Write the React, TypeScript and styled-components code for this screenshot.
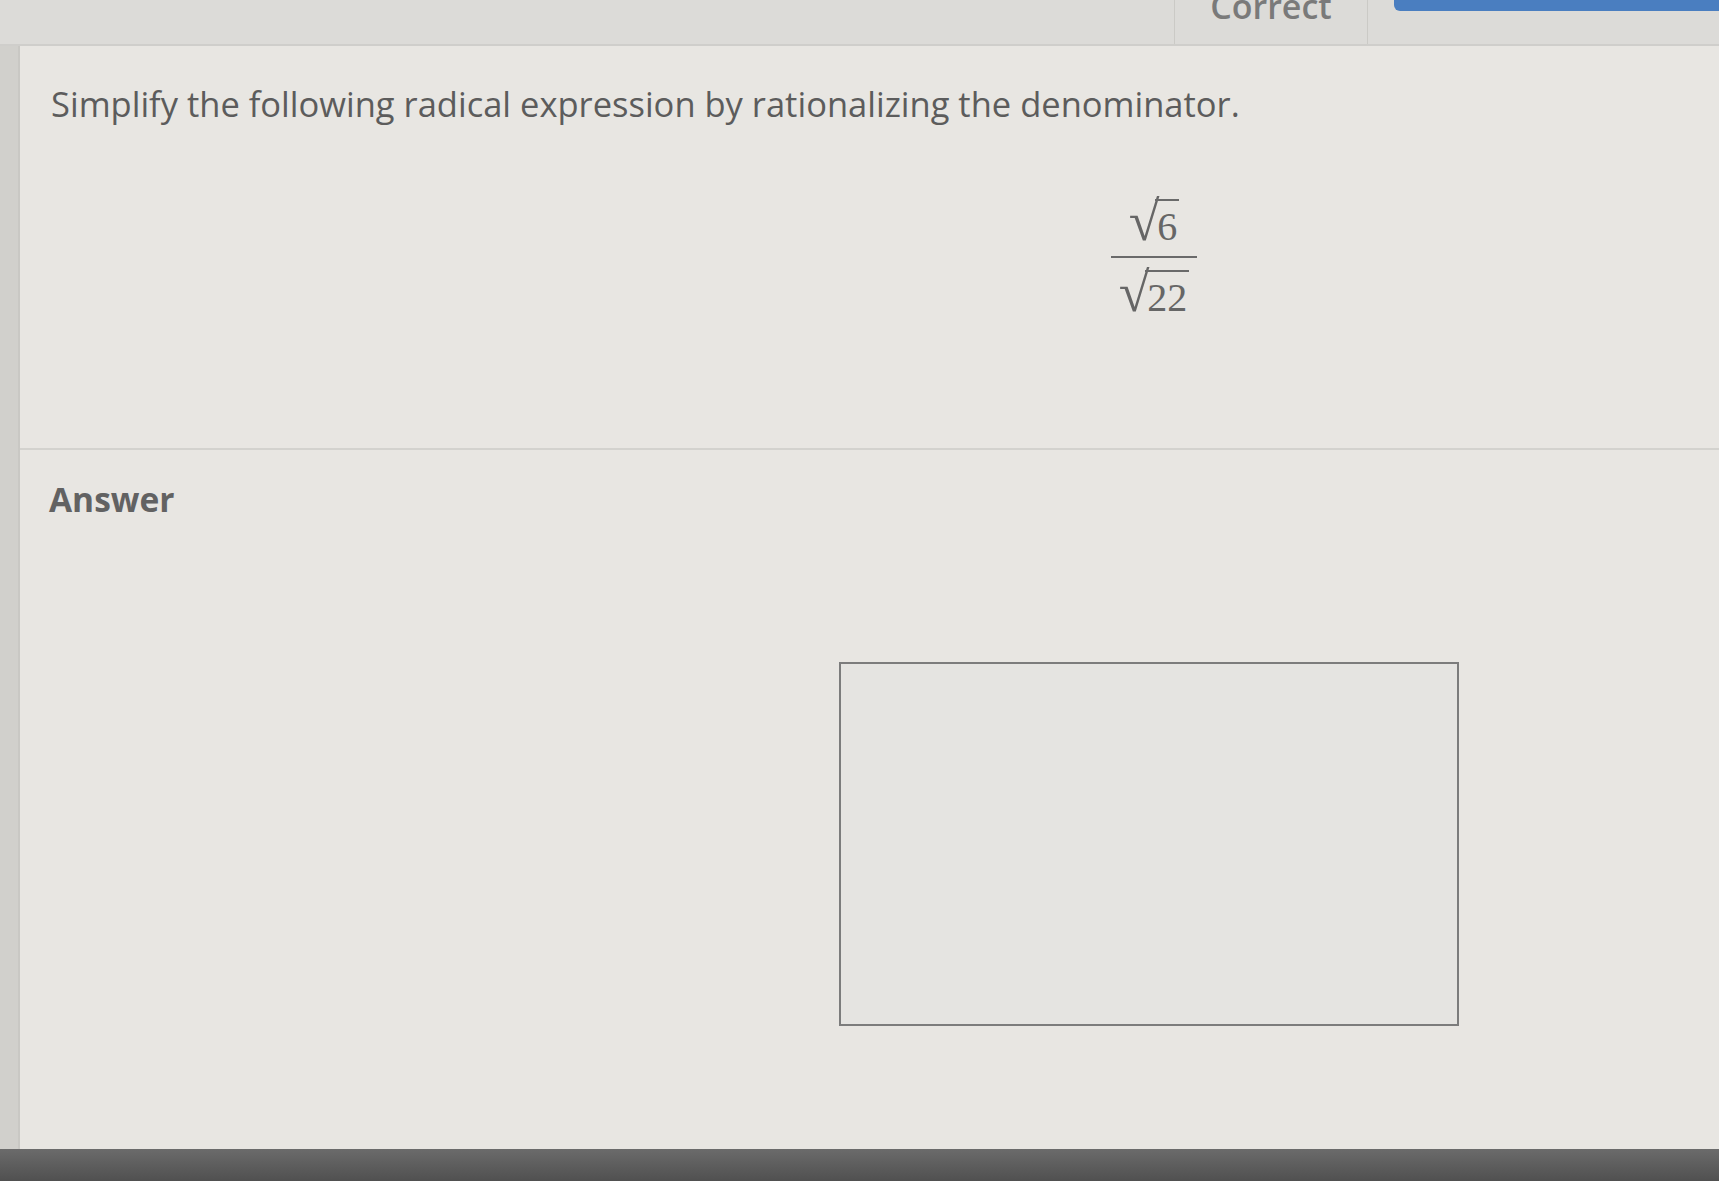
import React from 'react';
import styled, { createGlobalStyle } from 'styled-components';

const GlobalStyle = createGlobalStyle`
    html, body {
        margin: 0;
        padding: 0;
        background: #d6d5d2;
    }
    * {
        box-sizing: border-box;
    }
`

const Radical: React.FC<{ value: string }> = ({ value }) => (
    <RadicalWrapper>
        <RootSign>√</RootSign>
        <Radicand>{value}</Radicand>
    </RadicalWrapper>
);

export default function App() {
    return (
        <Page>
            <GlobalStyle />
            <TopBar>
                <TabSpacer />
                <Tab>Correct</Tab>
                <Progress>
                    <ProgressFill />
                </Progress>
            </TopBar>
            <Body>
                <Gutter />
                <Main>
                    <Question>
                        <Prompt>
                            Simplify the following radical expression by rationalizing the denominator.
                        </Prompt>
                        <FractionRow>
                            <Fraction>
                                <Radical value="6" />
                                <FractionBar />
                                <Radical value="22" />
                            </Fraction>
                        </FractionRow>
                    </Question>
                    <AnswerSection>
                        <AnswerLabel>Answer</AnswerLabel>
                        <AnswerRow>
                            <AnswerBox />
                        </AnswerRow>
                    </AnswerSection>
                </Main>
            </Body>
            <BottomBar />
        </Page>
    );
}

const Page = styled.div`
    width: 100vw;
    height: 100vh;
    display: flex;
    flex-direction: column;
    overflow: hidden;
    font-family: "Open Sans", "Noto Sans", sans-serif;
    color: #5e5e5e;
`

const TopBar = styled.div`
    height: 46px;
    flex-shrink: 0;
    display: flex;
    flex-direction: row;
    align-items: stretch;
    background: #dcdbd8;
    border-bottom: 2px solid #cfcecb;
`

const TabSpacer = styled.div`
    flex: 1;
`

const Tab = styled.div`
    width: 194px;
    border-left: 1px solid #cbcac6;
    border-right: 1px solid #cbcac6;
    display: flex;
    justify-content: center;
    align-items: flex-start;
    font-size: 34px;
    font-weight: 600;
    color: #7a7a7a;
    line-height: 1;
    margin-top: -11px;
`

const Progress = styled.div`
    width: 351px;
    padding-left: 26px;
`

const ProgressFill = styled.div`
    height: 11px;
    background: #4a7ec0;
    border-bottom-left-radius: 6px;
`

const Body = styled.div`
    flex: 1;
    display: flex;
    flex-direction: row;
    min-height: 0;
`

const Gutter = styled.div`
    width: 20px;
    flex-shrink: 0;
    background: #d1d0cc;
    border-right: 2px solid #c9c8c4;
`

const Main = styled.div`
    flex: 1;
    display: flex;
    flex-direction: column;
    background: #e8e6e2;
`

const Question = styled.section`
    padding: 36px 0 0 31px;
    height: 404px;
    border-bottom: 2px solid #d3d2ce;
`

const Prompt = styled.p`
    margin: 0;
    font-size: 34.5px;
    line-height: 1.3;
    color: #5c5c5c;
`

const FractionRow = styled.div`
    display: flex;
    justify-content: flex-start;
    padding-left: 1060px;
    margin-top: 70px;
`

const Fraction = styled.div`
    display: flex;
    flex-direction: column;
    align-items: center;
    width: 86px;
`

const FractionBar = styled.div`
    width: 100%;
    height: 2px;
    background: #6a6a6a;
    margin: 9px 0 10px;
`

const RadicalWrapper = styled.span`
    display: inline-flex;
    align-items: flex-start;
    font-family: "Liberation Serif", "DejaVu Serif", serif;
    color: #666;
    line-height: 1;
`

const RootSign = styled.span`
    font-size: 56px;
    line-height: 0.88;
    margin-right: -4px;
`

const Radicand = styled.span`
    font-size: 40px;
    border-top: 2px solid #6a6a6a;
    padding: 6px 2px 0 2px;
    margin-top: 2px;
    line-height: 1;
`

const AnswerSection = styled.section`
    flex: 1;
    padding: 26px 0 0 29px;
`

const AnswerLabel = styled.h3`
    margin: 0;
    font-size: 33.5px;
    font-weight: 700;
    color: #626262;
`

const AnswerRow = styled.div`
    display: flex;
    padding-left: 790px;
    margin-top: 140px;
`

const AnswerBox = styled.div`
    width: 620px;
    height: 364px;
    border: 2px solid #7c7c7c;
    background: #e5e4e1;
`

const BottomBar = styled.div`
    height: 32px;
    flex-shrink: 0;
    background: linear-gradient(180deg, #6b6b6b 0%, #505050 100%);
`
